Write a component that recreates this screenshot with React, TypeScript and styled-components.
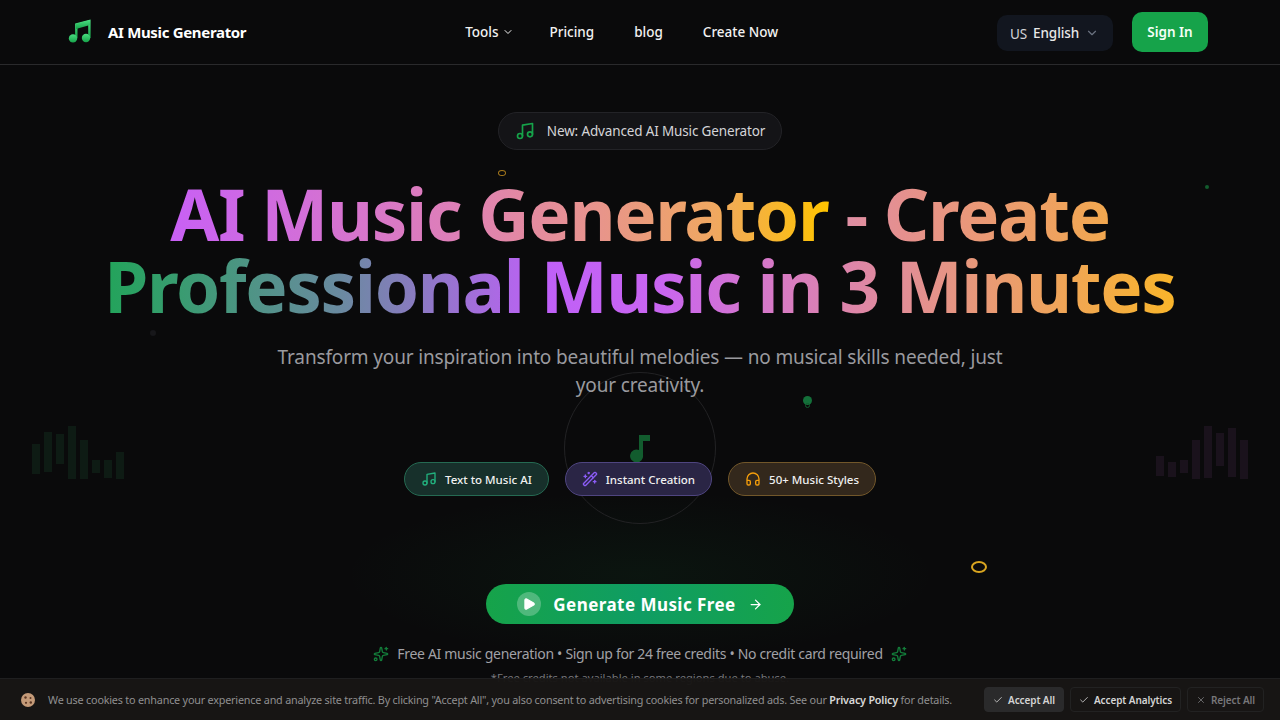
import React from 'react';
import styled, { createGlobalStyle } from 'styled-components';
import { ArrowRight, Check, ChevronDown, Headphones, Music, Play, Sparkles, Wand2, X } from 'lucide-react';

const FONT = `"Noto Sans", "Open Sans", "Liberation Sans", sans-serif`;

const GlobalStyle = createGlobalStyle`
  html, body {
    margin: 0;
    padding: 0;
    height: 100%;
    overflow: hidden;
    background: #0a0a0b;
    color: #fff;
    font-family: ${FONT};
  }
  * { box-sizing: border-box; }
`;

const Page = styled.div`
  position: relative;
  width: 1280px;
  height: 720px;
  overflow: hidden;
  background: #0a0a0b;
`;

const Header = styled.header`
  position: relative;
  height: 65px;
  border-bottom: 1px solid #2a2a2c;
  padding: 0 72px 0 68px;
  display: flex;
  justify-content: space-between;
  align-items: center;
`;

const Logo = styled.div`
  display: flex;
  align-items: center;
  gap: 16px;
  font-size: 15px;
  font-weight: 700;
  letter-spacing: -0.33px;
`;

const Nav = styled.nav`
  display: flex;
  align-items: center;
  gap: 40px;
  font-size: 13.5px;
  font-weight: 500;
  color: #f2f2f2;
`;

const NavItem = styled.span`
  display: flex;
  align-items: center;
  gap: 4px;
  svg { margin-right: -5px; }
`;

const HeaderRight = styled.div`
  display: flex;
  align-items: center;
  gap: 19px;
`;

const LangSelect = styled.div`
  width: 116px;
  height: 36px;
  margin-top: 1px;
  padding: 0 13px;
  border-radius: 10px;
  background: #12161f;
  display: flex;
  align-items: center;
  gap: 6px;
  font-size: 13.5px;
  font-weight: 500;
  letter-spacing: -0.1px;
  color: #e8e8e8;
  white-space: nowrap;
  svg { flex: none; color: #6b7280; margin-left: 0; }
`;

const Flag = styled.span`
  font-size: 13.5px;
  font-weight: 400;
  color: #d4d4d8;
  padding-top: 3px;
`;

const SignIn = styled.button`
  width: 76px;
  height: 40px;
  border: 0;
  border-radius: 10px;
  background: #16a34a;
  color: #f4fff7;
  font-family: ${FONT};
  font-size: 13.5px;
  font-weight: 600;
`;

const Hero = styled.main`
  position: relative;
  display: flex;
  flex-direction: column;
  align-items: center;
  padding-top: 47px;
`;

const Badge = styled.div`
  height: 38px;
  width: 284px;
  border-radius: 19px;
  border: 1px solid #232327;
  background: #141417;
  display: flex;
  align-items: center;
  justify-content: center;
  gap: 12px;
  font-size: 13.5px;
  letter-spacing: -0.15px;
  color: #d4d4d8;
  svg { color: #16a34a; }
`;

const Title = styled.h1`
  margin: 28px 0 0;
  font-size: 71px;
  line-height: 72px;
  font-weight: 700;
  letter-spacing: -1.35px;
  text-align: center;
  white-space: nowrap;
`;

const TitleLine = styled.span<{ $gradient: string }>`
  display: block;
  width: fit-content;
  margin: 0 auto;
  background: ${({ $gradient }) => $gradient};
  -webkit-background-clip: text;
  background-clip: text;
  color: transparent;
`;

const Subtitle = styled.p`
  margin: 21px 0 0;
  width: 768px;
  font-size: 19px;
  line-height: 28px;
  letter-spacing: -0.15px;
  color: #9a9a9f;
  text-align: center;
`;

const Pills = styled.div`
  position: relative;
  margin-top: 63px;
  display: flex;
  gap: 16px;
`;

const Pill = styled.div<{ $border: string; $bg: string; $icon: string }>`
  height: 34px;
  padding: 0 16px;
  border-radius: 17px;
  border: 1px solid ${({ $border }) => $border};
  background: ${({ $bg }) => $bg};
  display: flex;
  align-items: center;
  gap: 8px;
  font-size: 11.5px;
  font-weight: 500;
  color: #f0f0f0;
  svg { color: ${({ $icon }) => $icon}; }
`;

const CtaGlow = styled.div`
  position: absolute;
  left: 340px;
  top: 490px;
  width: 600px;
  height: 170px;
  background: radial-gradient(ellipse at center, rgba(22, 163, 74, 0.07), transparent 70%);
`;

const Cta = styled.button`
  position: relative;
  margin-top: 88px;
  width: 308px;
  height: 40px;
  border: 0;
  border-radius: 20px;
  background: linear-gradient(90deg, #16a34a, #0f9d63 50%, #16a34a);
  color: #fff;
  font-family: ${FONT};
  font-size: 17px;
  font-weight: 700;
  letter-spacing: 0.45px;
  display: flex;
  align-items: center;
  justify-content: center;
  gap: 12px;
`;

const PlayCircle = styled.span`
  width: 24px;
  height: 24px;
  border-radius: 50%;
  background: rgba(255, 255, 255, 0.25);
  display: flex;
  align-items: center;
  justify-content: center;
`;

const FreeLine = styled.div`
  position: relative;
  margin-top: 20px;
  display: flex;
  align-items: center;
  gap: 8px;
  font-size: 14px;
  line-height: 20px;
  letter-spacing: -0.32px;
  color: #a1a1a6;
  svg { color: #16a34a; opacity: 0.75; }
`;

const FinePrint = styled.div`
  margin-top: 6px;
  font-size: 11.2px;
  line-height: 16px;
  color: #77777c;
`;

const Bars = styled.div<{ $left: number; $color: string }>`
  position: absolute;
  left: ${({ $left }) => $left}px;
  top: 426px;
  display: flex;
  gap: 4px;
  color: ${({ $color }) => $color};
`;

const Bar = styled.i<{ $top: number; $h: number }>`
  display: block;
  width: 8px;
  height: ${({ $h }) => $h}px;
  margin-top: ${({ $top }) => $top}px;
  background: currentColor;
`;

const Ring = styled.div`
  position: absolute;
  left: 564px;
  top: 372px;
  width: 152px;
  height: 152px;
  border-radius: 50%;
  border: 1px solid #222224;
`;

const FloatNote = styled.svg`
  position: absolute;
  left: 629px;
  top: 433px;
`;

const Speck = styled.span<{ $x: number; $y: number; $w: number; $h: number; $border?: string; $fill?: string }>`
  position: absolute;
  left: ${({ $x }) => $x}px;
  top: ${({ $y }) => $y}px;
  width: ${({ $w }) => $w}px;
  height: ${({ $h }) => $h}px;
  border-radius: 50%;
  border: ${({ $border }) => $border ?? '0'};
  background: ${({ $fill }) => $fill ?? 'transparent'};
`;

const CookieBar = styled.div`
  position: absolute;
  left: 0;
  right: 0;
  bottom: 0;
  height: 42px;
  border-top: 1px solid #1f1f20;
  background: rgba(24, 22, 21, 0.97);
  padding: 0 16px 0 21px;
  display: flex;
  align-items: center;
`;

const CookieIcon = styled.svg`
  flex: none;
  margin-right: 13px;
`;

const CookieText = styled.p`
  flex: 1;
  margin: 0;
  font-size: 10.8px;
  letter-spacing: -0.2px;
  color: #8f8f90;
  white-space: nowrap;
  b { color: #d8d8d8; font-weight: 600; }
`;

const CookieButtons = styled.div`
  display: flex;
  gap: 6px;
`;

const CookieButton = styled.button<{ $variant: 'solid' | 'outline' | 'muted' }>`
  height: 25px;
  padding: 0 8px;
  border-radius: 4px;
  border: 1px solid ${({ $variant }) => ($variant === 'solid' ? '#2a2a2b' : '#222222')};
  background: ${({ $variant }) => ($variant === 'solid' ? '#2a2a2b' : 'transparent')};
  color: ${({ $variant }) => ($variant === 'muted' ? '#77777a' : '#d4d4d4')};
  font-family: ${FONT};
  font-size: 10px;
  font-weight: 600;
  letter-spacing: -0.1px;
  display: flex;
  align-items: center;
  gap: 5px;
  white-space: nowrap;
`;

const LogoNote = () => (
  <svg width="24" height="26" viewBox="0 0 24 26">
    <defs>
      <linearGradient id="logoNote" x1="0" y1="0" x2="0" y2="1">
        <stop offset="0" stopColor="#4ade80" />
        <stop offset="1" stopColor="#16a34a" />
      </linearGradient>
    </defs>
    <path d="M8.3 19V5.5L21.4 2V19" fill="none" stroke="url(#logoNote)" strokeWidth="2.4" />
    <path d="M8 5L22 1V6L8 10Z" fill="url(#logoNote)" />
    <circle cx="5" cy="19.4" r="4.2" fill="url(#logoNote)" />
    <circle cx="18" cy="19" r="4.2" fill="url(#logoNote)" />
  </svg>
);

const FEATURES = [
  { label: 'Text to Music AI', Icon: Music, border: '#256a52', bg: '#17302b', icon: '#22b07d' },
  { label: 'Instant Creation', Icon: Wand2, border: '#4f4580', bg: '#2a2545', icon: '#8b5cf6' },
  { label: '50+ Music Styles', Icon: Headphones, border: '#72572a', bg: '#33281c', icon: '#f59e0b' },
];

const LEFT_BARS = [
  [18, 30], [6, 40], [8, 30], [0, 53], [14, 39], [34, 13], [34, 18], [26, 27],
];
const RIGHT_BARS = [
  [30, 20], [36, 15], [34, 13], [14, 39], [0, 52], [7, 33], [2, 49], [14, 39],
];

export default function App() {
  return (
    <Page>
      <GlobalStyle />
      <Bars $left={32} $color="#0e1b14">
        {LEFT_BARS.map(([t, h], i) => <Bar key={i} $top={t} $h={h} />)}
      </Bars>
      <Bars $left={1156} $color="#1a121c">
        {RIGHT_BARS.map(([t, h], i) => <Bar key={i} $top={t} $h={h} />)}
      </Bars>
      <CtaGlow />
      <Ring />
      <FloatNote width="22" height="30" viewBox="0 0 22 30">
        <path d="M10 2H21V8H14V22A6.5 6.5 0 1 1 10 17Z" fill="#125c2e" />
      </FloatNote>
      <Speck $x={498} $y={170} $w={8} $h={6} $border="1px solid #a87a1c" />
      <Speck $x={971} $y={561} $w={16} $h={12} $border="2px solid #d9a520" />
      <Speck $x={1205} $y={185} $w={4} $h={4} $fill="#125c2e" />
      <Speck $x={803} $y={396} $w={9} $h={9} $fill="#14703a" />
      <Speck $x={805} $y={403} $w={5} $h={5} $border="1px solid #125c2e" />
      <Speck $x={150} $y={330} $w={6} $h={6} $fill="#17171a" />

      <Header>
        <Logo>
          <LogoNote />
          AI Music Generator
        </Logo>
        <Nav>
          <NavItem>Tools <ChevronDown size={12} /></NavItem>
          <NavItem>Pricing</NavItem>
          <NavItem>blog</NavItem>
          <NavItem>Create Now</NavItem>
        </Nav>
        <HeaderRight>
          <LangSelect>
            <Flag>US</Flag>
            English
            <ChevronDown size={14} />
          </LangSelect>
          <SignIn>Sign In</SignIn>
        </HeaderRight>
      </Header>

      <Hero>
        <Badge>
          <Music size={20} />
          New: Advanced AI Music Generator
        </Badge>
        <Title>
          <TitleLine $gradient="linear-gradient(90deg, #c860f5 0%, #de7fb8 30%, #e8958a 46%, #f0a860 58%, #ffc400 70%, #df8fa5 71.8%, #e5908e 78%, #f2a84e 100%)">
            AI Music Generator - Create
          </TitleLine>
          <TitleLine $gradient="linear-gradient(90deg, #22a45a 0%, #6a8aa0 22%, #bf60f8 41%, #c965f0 52%, #d87cc0 64%, #e59388 78%, #f9b52a 100%)">
            Professional Music in 3 Minutes
          </TitleLine>
        </Title>
        <Subtitle>
          Transform your inspiration into beautiful melodies — no musical skills needed, just your creativity.
        </Subtitle>
        <Pills>
          {FEATURES.map(({ label, Icon, border, bg, icon }) => (
            <Pill key={label} $border={border} $bg={bg} $icon={icon}>
              <Icon size={16} />
              {label}
            </Pill>
          ))}
        </Pills>
        <Cta>
          <PlayCircle><Play size={14} fill="#fff" /></PlayCircle>
          Generate Music Free
          <ArrowRight size={15} />
        </Cta>
        <FreeLine>
          <Sparkles size={16} />
          Free AI music generation • Sign up for 24 free credits • No credit card required
          <Sparkles size={16} />
        </FreeLine>
        <FinePrint>*Free credits not available in some regions due to abuse.</FinePrint>
      </Hero>

      <CookieBar>
        <CookieIcon width="14" height="14" viewBox="0 0 14 14">
          <circle cx="7" cy="7" r="7" fill="#c49a78" />
          <circle cx="4.5" cy="4.5" r="1.2" fill="#5a3522" />
          <circle cx="9.5" cy="5" r="1" fill="#5a3522" />
          <circle cx="5" cy="9.8" r="1.1" fill="#5a3522" />
          <circle cx="9.8" cy="9.5" r="1.2" fill="#5a3522" />
        </CookieIcon>
        <CookieText>
          We use cookies to enhance your experience and analyze site traffic. By clicking "Accept All", you also consent to advertising cookies for personalized ads. See our <b>Privacy Policy</b> for details.
        </CookieText>
        <CookieButtons>
          <CookieButton $variant="solid"><Check size={10} />Accept All</CookieButton>
          <CookieButton $variant="outline"><Check size={10} />Accept Analytics</CookieButton>
          <CookieButton $variant="muted"><X size={10} />Reject All</CookieButton>
        </CookieButtons>
      </CookieBar>
    </Page>
  );
}
